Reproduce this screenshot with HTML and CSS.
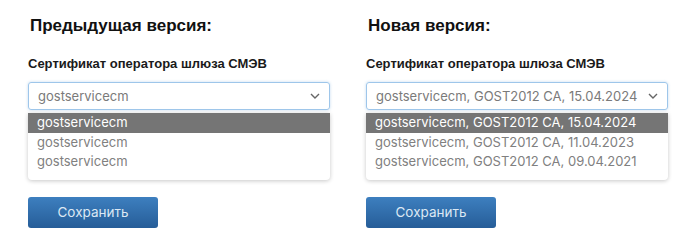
FILE: index.html
```html
<!DOCTYPE html>
<html lang="ru">
<head>
    <meta charset="UTF-8">
    <title>Сертификат оператора шлюза СМЭВ</title>
    <link rel="stylesheet" href="styles.css">
</head>
<body>
    <div class="compare">
        <div class="panel">
            <h2>Предыдущая версия:</h2>
            <div class="field-label">Сертификат оператора шлюза СМЭВ</div>
            <div class="select">
                <span>gostservicecm</span>
                <svg class="chevron" width="10" height="6" viewBox="0 0 10 6"><path d="M1 1l4 4 4-4" fill="none" stroke="#666" stroke-width="1.4"/></svg>
            </div>
            <ul class="options">
                <li class="active">gostservicecm</li>
                <li>gostservicecm</li>
                <li>gostservicecm</li>
            </ul>
            <button class="save-button">Сохранить</button>
        </div>

        <div class="panel">
            <h2>Новая версия:</h2>
            <div class="field-label">Сертификат оператора шлюза СМЭВ</div>
            <div class="select">
                <span>gostservicecm, GOST2012 CA, 15.04.2024</span>
                <svg class="chevron" width="10" height="6" viewBox="0 0 10 6"><path d="M1 1l4 4 4-4" fill="none" stroke="#666" stroke-width="1.4"/></svg>
            </div>
            <ul class="options">
                <li class="active">gostservicecm, GOST2012 CA, 15.04.2024</li>
                <li>gostservicecm, GOST2012 CA, 11.04.2023</li>
                <li>gostservicecm, GOST2012 CA, 09.04.2021</li>
            </ul>
            <button class="save-button">Сохранить</button>
        </div>
    </div>
</body>
</html>
```

FILE: styles.css
```css
* {
    margin: 0;
    padding: 0;
    box-sizing: border-box;
}

body {
    font-family: Inter, "Liberation Sans", sans-serif;
    background: #fff;
    color: #222;
}

.compare {
    display: flex;
    gap: 36px;
    padding: 14px 0 0 28px;
}

.panel {
    width: 302px;
}

h2 {
    font-family: "Liberation Sans", Arial, sans-serif;
    font-size: 17px;
    font-weight: 700;
    color: #111;
    padding-left: 2px;
    line-height: 24px;
}

.field-label {
    font-family: "Liberation Sans", Arial, sans-serif;
    font-size: 13px;
    font-weight: 700;
    color: #1a1a1a;
    margin-top: 18px;
    line-height: 16px;
}

.select {
    margin-top: 10px;
    height: 28px;
    border: 1px solid #9ec6ea;
    border-radius: 3px;
    box-shadow: 0 0 3px rgba(120, 170, 220, 0.45);
    display: flex;
    align-items: center;
    justify-content: space-between;
    padding: 0 9px 0 9px;
    font-size: 13px;
    color: #7a7a7a;
}

.options {
    list-style: none;
    margin-top: 3px;
    padding-bottom: 8px;
    border-radius: 0 0 4px 4px;
    box-shadow: 0 1px 4px rgba(0, 0, 0, 0.22);
    font-size: 13px;
    color: #808080;
}

.options li {
    height: 19.5px;
    line-height: 19.5px;
    padding-left: 9px;
}

.options li.active {
    background: #757575;
    color: #fff;
}

.save-button {
    margin-top: 17px;
    width: 130px;
    height: 31px;
    border: none;
    border-radius: 3px;
    background: linear-gradient(#3d7fbf, #265d98);
    color: #dce8f4;
    font-family: Inter, "Liberation Sans", sans-serif;
    font-size: 13.5px;
    cursor: pointer;
}
```
